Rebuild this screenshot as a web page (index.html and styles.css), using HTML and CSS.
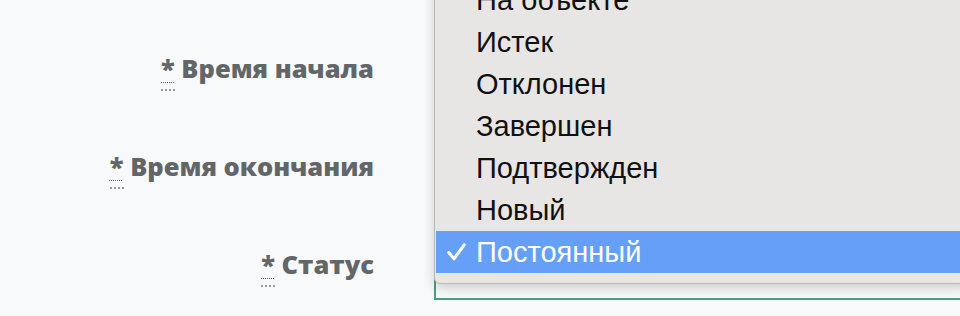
FILE: index.html
```html
<!DOCTYPE html>
<html lang="ru">
<head>
  <meta charset="UTF-8">
  <title>Бронирование</title>
  <link rel="stylesheet" href="styles.css">
</head>
<body>
  <form class="form">
    <div class="form-row">
      <label class="form-label"><abbr title="обязательно">*</abbr> Время начала</label>
      <div class="form-field"></div>
    </div>
    <div class="form-row">
      <label class="form-label"><abbr title="обязательно">*</abbr> Время окончания</label>
      <div class="form-field"></div>
    </div>
    <div class="form-row">
      <label class="form-label"><abbr title="обязательно">*</abbr> Статус</label>
      <div class="form-field">
        <div class="select-box"></div>
      </div>
    </div>

    <ul class="select-menu">
      <li class="option">На объекте</li>
      <li class="option">Истек</li>
      <li class="option">Отклонен</li>
      <li class="option">Завершен</li>
      <li class="option">Подтвержден</li>
      <li class="option">Новый</li>
      <li class="option selected">
        <svg class="check" width="19" height="18" viewBox="0 0 19 18"><path d="M1.8 9.5 L7 15.8 L17.2 1.8" fill="none" stroke="#fff" stroke-width="3" stroke-linecap="round" stroke-linejoin="round"/></svg>
        Постоянный
      </li>
    </ul>
  </form>
</body>
</html>
```

FILE: styles.css
```css
body { margin: 0; background: #f8f9fb; font-family: "Open Sans", Arial, sans-serif; overflow: hidden; }
.form { position: relative; height: 316px; padding-top: 19px; box-sizing: border-box; }
.form-row { display: flex; align-items: center; height: 98px; }
.form-label { width: 374px; text-align: right; font-size: 25.5px; font-weight: 800; color: #636669; }
.form-label abbr { text-decoration: underline dotted 1px; text-underline-offset: 4px; border-bottom: 2px dotted #999; padding-bottom: 4px; }
.form-field { flex: 1; margin-left: 60px; height: 67px; }
.select-box { height: 65px; border: 2px solid #4aa07e; border-right: none; }
.select-menu { position: absolute; left: 434px; right: -10px; top: -22px; margin: 0; padding: 0 0 10px 1px; list-style: none; background: #e8e5e5; border: 1px solid #b9b7b7; border-radius: 0 0 6px 6px; box-shadow: 0 4px 12px rgba(0, 0, 0, 0.18); font-family: "Liberation Sans", Arial, sans-serif; font-size: 29px; color: #111; }
.option { position: relative; height: 42px; line-height: 42px; padding-left: 40px; }
.option.selected { background: #669ff8; color: #fff; }
.check { position: absolute; left: 11px; top: 12px; }
```
